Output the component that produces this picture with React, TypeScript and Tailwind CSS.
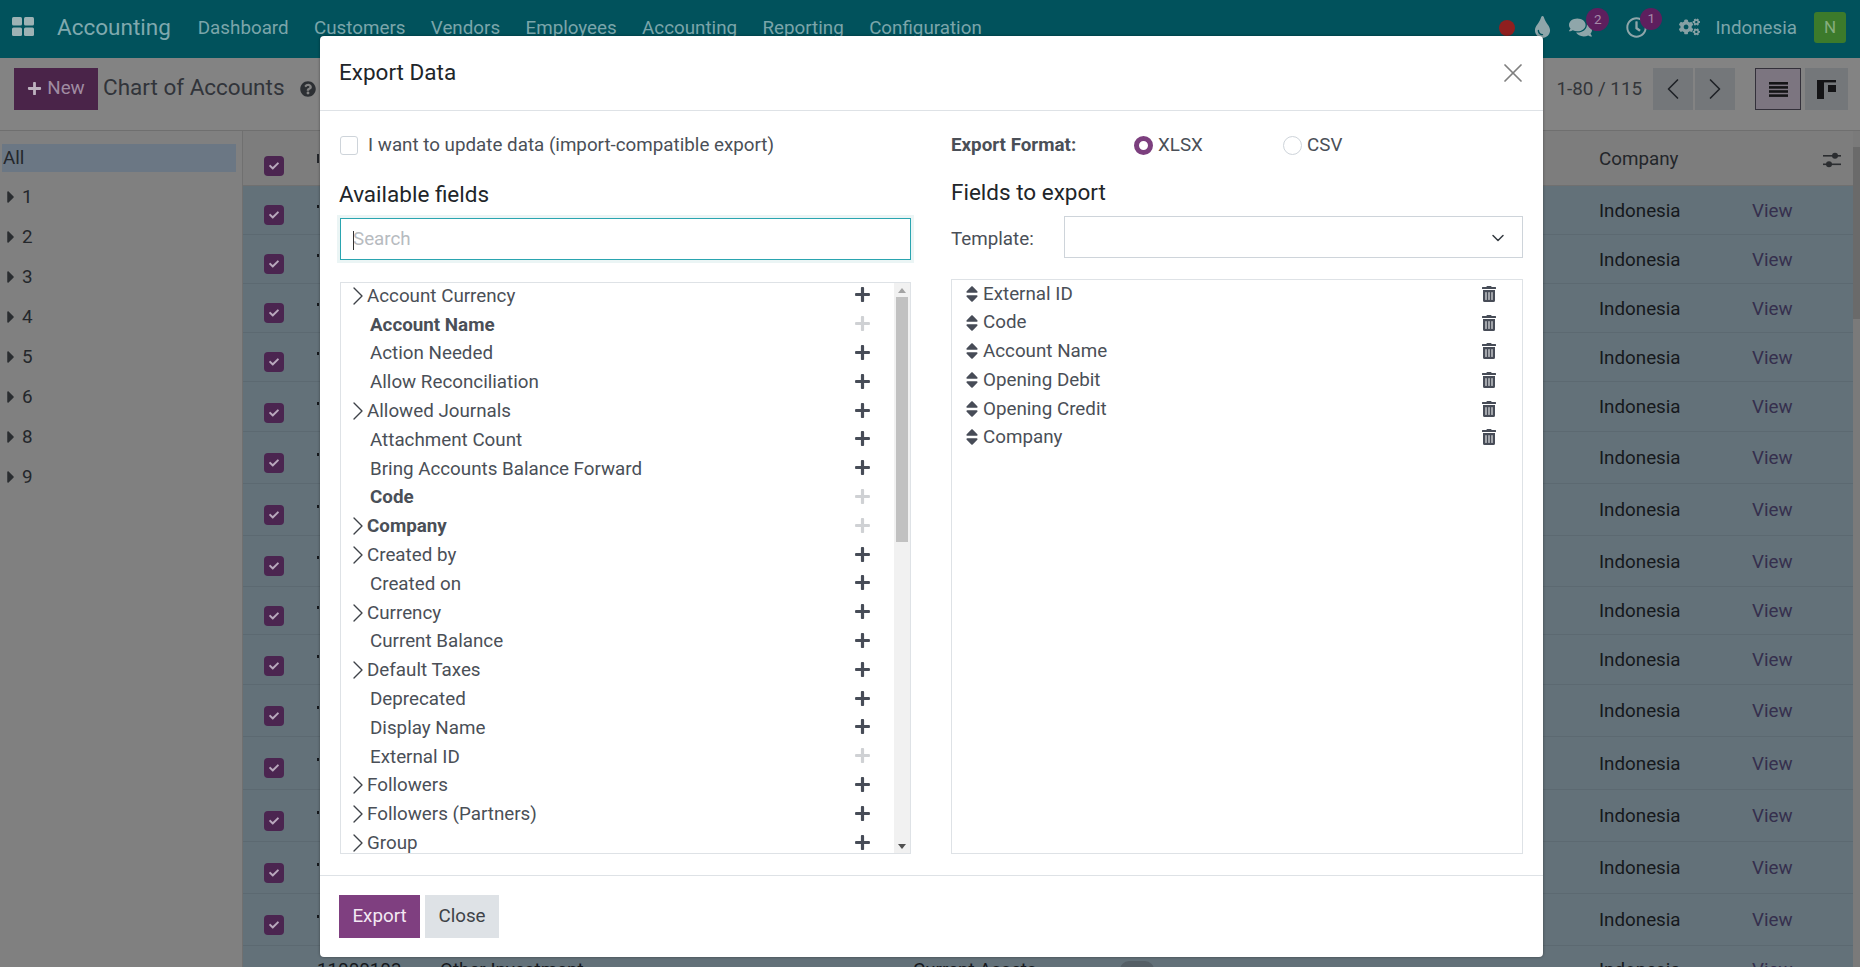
import { FaCaretRight, FaCheck, FaCogs, FaComments, FaPlus, FaQuestionCircle, FaRegClock, FaSort, FaTint, FaTrashAlt } from "react-icons/fa";
import { ChevronDown, ChevronLeft, ChevronRight, X } from "lucide-react";

const navLinks = ["Dashboard", "Customers", "Vendors", "Employees", "Accounting", "Reporting", "Configuration"];
const groups = ["1", "2", "3", "4", "5", "6", "8", "9"];

// rows behind the dialog only show their right-hand cells
const rows = [
  { h: "h-[49px]", pt: "pt-[11px]" },
  { h: "h-[49px]", pt: "pt-[11px]" },
  { h: "h-[49px]", pt: "pt-[11px]" },
  { h: "h-[49px]", pt: "pt-[11px]" },
  { h: "h-[50px]", pt: "pt-[13px]" },
  { h: "h-[52px]", pt: "pt-[13px]" },
  { h: "h-[52px]", pt: "pt-[13px]" },
  { h: "h-[51px]", pt: "pt-[12px]" },
  { h: "h-[48px]", pt: "pt-[11px]" },
  { h: "h-[50px]", pt: "pt-[13px]" },
  { h: "h-[52px]", pt: "pt-[13px]" },
  { h: "h-[53px]", pt: "pt-[13px]" },
  { h: "h-[52px]", pt: "pt-[13px]" },
  { h: "h-[52px]", pt: "pt-[13px]" },
  { h: "h-[52px]", pt: "pt-[13px]" },
];

const available = [
  { label: "Account Currency", expand: true },
  { label: "Account Name", bold: true, added: true },
  { label: "Action Needed" },
  { label: "Allow Reconciliation" },
  { label: "Allowed Journals", expand: true },
  { label: "Attachment Count" },
  { label: "Bring Accounts Balance Forward" },
  { label: "Code", bold: true, added: true },
  { label: "Company", expand: true, bold: true, added: true },
  { label: "Created by", expand: true },
  { label: "Created on" },
  { label: "Currency", expand: true },
  { label: "Current Balance" },
  { label: "Default Taxes", expand: true },
  { label: "Deprecated" },
  { label: "Display Name" },
  { label: "External ID", added: true },
  { label: "Followers", expand: true },
  { label: "Followers (Partners)", expand: true },
  { label: "Group", expand: true },
];

const selected = ["External ID", "Code", "Account Name", "Opening Debit", "Opening Credit", "Company"];

function RowCheck() {
  return (
    <span className="mt-2 ml-[21px] flex h-5 w-5 items-center justify-center rounded-[4px] bg-[#4b2550] text-[#b9a8bd]">
      <FaCheck className="h-[10px] w-[10px]" />
    </span>
  );
}

function Navbar() {
  return (
    <header className="flex h-[58px] shrink-0 items-center bg-[#01525c] pb-[2px] text-[#7ba5aa] shadow-[0_1px_2px_rgba(0,0,0,0.3)]">
      <svg className="mb-[3px] ml-3 h-[19px] w-[22px] text-[#9db2b4]" viewBox="0 0 22 19" fill="currentColor">
        <rect width="10" height="8.5" rx="1.5" />
        <rect x="12" width="10" height="8.5" rx="1.5" />
        <rect y="10.5" width="10" height="8.5" rx="1.5" />
        <rect x="12" y="10.5" width="10" height="8.5" rx="1.5" />
      </svg>
      <span className="ml-[23px] text-[22.5px] text-[#80a9ae]">Accounting</span>
      <nav className="ml-[27px] flex gap-[25.4px] text-[18.8px]">
        {navLinks.map((l, i) => (
          <span key={i}>{l}</span>
        ))}
      </nav>
      <div className="ml-auto flex items-center pr-[14px]">
        <span className="h-4 w-4 rounded-full bg-[#8f1f1f]" />
        <FaTint className="mb-[2px] ml-[19px] h-[22px] w-[17px] text-[#8fa6aa]" />
        <span className="relative mb-[2px] ml-[18px]">
          <FaComments className="h-[21px] w-[23px] text-[#8fa6aa]" />
          <span className="absolute -top-[9px] left-[17px] flex h-[23px] w-[23px] items-center justify-center rounded-full bg-[#5e1f5e] text-[13.5px] text-[#a58aa8]">2</span>
        </span>
        <span className="relative mb-[2px] ml-[34px]">
          <FaRegClock className="h-[21px] w-[21px] text-[#8fa6aa]" />
          <span className="absolute -top-[9px] left-[14px] flex h-[22px] w-[22px] items-center justify-center rounded-full bg-[#5e1f5e] text-[13.5px] text-[#a58aa8]">1</span>
        </span>
        <FaCogs className="mb-[2px] ml-[32px] h-[18px] w-[21px] text-[#86a0a4]" />
        <span className="ml-[15px] text-[18.8px]">Indonesia</span>
        <span className="mt-[-1px] ml-[17px] flex h-[31px] w-[32px] items-center justify-center rounded-[3px] bg-[#3c7a2b] text-[17px] text-[#86ad7e]">N</span>
      </div>
    </header>
  );
}

function ControlPanel() {
  return (
    <div className="flex h-[73px] shrink-0 items-start border-b border-[#6f6f6f] bg-[#838383] pt-[10px] pr-[12px] pl-[14px]">
      <button className="flex h-[42px] w-[84px] items-center justify-center gap-[5px] bg-[#4a2449] pb-[1px] text-[18.8px] text-[#a08ca2]">
        <FaPlus className="h-[15px] w-[15px] text-[#bdb2bf]" />
        New
      </button>
      <span className="mt-[3px] ml-[5px] text-[22.5px] text-[#31343a]">Chart of Accounts</span>
      <FaQuestionCircle className="mt-[13px] ml-[15px] h-4 w-4 text-[#2c2f33]" />
      <span className="mt-[7px] ml-auto text-[18.8px] text-[#33363a]">1-80 / 115</span>
      <button className="ml-[11px] flex h-[42px] w-[40px] items-center justify-center bg-[#74777a] text-[#1f2226]">
        <ChevronLeft className="h-[36px] w-[36px]" strokeWidth={1.1} />
      </button>
      <button className="ml-[2px] flex h-[42px] w-[40px] items-center justify-center bg-[#74777a] text-[#1f2226]">
        <ChevronRight className="h-[36px] w-[36px]" strokeWidth={1.1} />
      </button>
      <button className="ml-[20px] flex h-[42px] w-[46px] items-center justify-center border border-[#33303a] bg-[#7c7580]">
        <svg className="h-[15px] w-[19px] text-[#141416]" viewBox="0 0 19 15" fill="currentColor">
          <rect width="19" height="2.6" />
          <rect y="4.1" width="19" height="2.6" />
          <rect y="8.2" width="19" height="2.6" />
          <rect y="12.3" width="19" height="2.6" />
        </svg>
      </button>
      <button className="ml-[4px] flex h-[42px] w-[43px] items-center justify-center bg-[#74777a]">
        <svg className="h-[19px] w-[19px] text-[#141416]" viewBox="0 0 19 19" fill="currentColor">
          <rect width="19" height="2.4" />
          <rect y="2" width="7" height="17" />
          <rect x="11" y="5" width="8" height="7" />
        </svg>
      </button>
    </div>
  );
}

function Sidebar() {
  return (
    <aside className="w-[243px] shrink-0 border-r border-[#707070] bg-[#808080] pt-[13px] text-[18.8px] text-[#24272b]">
      <div className="ml-[2px] flex h-[28px] w-[234px] items-center bg-[#6b7784] pl-px">All</div>
      <div className="mt-[5px]">
        {groups.map((g) => (
          <div key={g} className="flex h-[40px] items-center">
            <FaCaretRight className="ml-[5px] h-[20px] w-[12px] text-[#2a2d30]" />
            <span className="ml-[5px]">{g}</span>
          </div>
        ))}
      </div>
    </aside>
  );
}

function AccountTable() {
  return (
    <main className="min-w-0 flex-1 overflow-hidden">
      <div className="flex h-[55px] border-b border-[#707070] bg-[#7d7d7d] text-[18.8px] text-[#23262a]">
        <span className="pt-[17px]">
          <RowCheck />
        </span>
        <span className="ml-[33px] flex w-[123px] items-center">
          <span className="h-[9px] w-[2px] bg-[#23262a]" />
        </span>
        <span className="w-[1159px]" />
        <span className="flex flex-1 items-center pt-[2px]">Company</span>
        <svg className="mt-[21px] mr-[12px] h-[16px] w-[18px] text-[#2b2d30]" viewBox="0 0 18 16" fill="currentColor">
          <rect y="3" width="18" height="1.6" />
          <circle cx="12" cy="3.8" r="3" />
          <rect y="11.5" width="18" height="1.6" />
          <circle cx="6" cy="12.3" r="3" />
        </svg>
      </div>
      {rows.map((r, i) => (
        <div key={i} className={`flex border-b border-[#5c6971] bg-[#637179] text-[18.8px] text-[#15181c] ${r.h}`}>
          <span className={r.pt}>
            <RowCheck />
          </span>
          <span className="ml-[33px] flex w-[123px] items-center">
            <span className="mb-[7px] h-[3px] w-[2px] bg-[#15181c]" />
          </span>
          <span className="w-[1159px]" />
          <span className="flex w-[153px] items-center pt-[2px]">Indonesia</span>
          <span className="flex items-center pt-[2px] text-[#352f4d]">View</span>
        </div>
      ))}
      <div className="flex h-[52px] bg-[#637179] pb-[4px] text-[18.8px] text-[#15181c]">
        <span className="pt-[13px]">
          <RowCheck />
        </span>
        <span className="ml-[33px] flex w-[123px] items-center">11000103</span>
        <span className="flex w-[473px] items-center">Other Investment</span>
        <span className="flex w-[207px] items-center">Current Assets</span>
        <span className="flex w-[479px] items-center">
          <span className="h-[18px] w-[34px] rounded-full bg-[#555f66]" />
        </span>
        <span className="flex w-[153px] items-center">Indonesia</span>
        <span className="flex items-center text-[#352f4d]">View</span>
      </div>
    </main>
  );
}

function FieldRow({ field }: { field: (typeof available)[number] }) {
  return (
    <div className="flex h-[28.8px] items-center text-[#4a4f57]">
      {field.expand ? (
        <span className="flex items-center pl-[11px]">
          <ChevronRight className="-mx-[10px] h-[32px] w-[32px] text-[#3e4248]" strokeWidth={1} />
          <span className={`ml-[3px] ${field.bold ? "font-bold" : ""}`}>{field.label}</span>
        </span>
      ) : (
        <span className={`pl-[29px] ${field.bold ? "font-bold" : ""}`}>{field.label}</span>
      )}
      <FaPlus className={`absolute left-[513px] mb-[2px] h-[17px] w-[17px] ${field.added ? "text-[#cfd1d4]" : "text-[#474c57]"}`} />
    </div>
  );
}

function ExportDialog() {
  return (
    <div className="absolute top-[36px] left-[320px] flex h-[921px] w-[1223px] flex-col rounded-[4px] bg-white text-[18.8px] shadow-[0_0_3px_rgba(0,0,0,0.4)]">
      <div className="flex h-[75px] shrink-0 items-start justify-between border-b border-[#dee2e6] pt-[21px] pr-[18px] pl-[19px]">
        <h4 className="-mt-px text-[22.5px] leading-[32px] text-[#212529]">Export Data</h4>
        <X className="mr-[-4px] h-[32px] w-[32px] text-[#7f7f7f]" strokeWidth={1.3} />
      </div>

      <div className="flex flex-1 gap-[40px] pt-[20px] pl-[20px]">
        <div className="w-[571px]">
          <label className="flex h-[28px] items-center text-[#4a4f57]">
            <span className="h-[19px] w-[18px] rounded-[3px] border border-[#ced4da] bg-white" />
            <span className="ml-[10px]">I want to update data (import-compatible export)</span>
          </label>
          <h4 className="mt-[19px] -ml-px h-[32px] text-[22.5px] leading-[32px] text-[#212529]">Available fields</h4>
          <div className="relative mt-[8px]">
            <input
              placeholder="Search"
              className="h-[42px] w-full border border-[#2aa5b0] px-[12px] text-[18.8px] shadow-[0_0_0_3px_rgba(1,126,132,0.08)] outline-none placeholder:text-[#b7bbbf]"
            />
            <span className="absolute top-[13px] left-[13px] h-[19px] w-px bg-[#333]" />
          </div>
          <div className="relative mt-[22px] flex h-[572px] overflow-hidden border border-[#dee2e6]">
            <div className="relative -mt-[1.5px] flex-1">
              {available.map((f) => (
                <FieldRow key={f.label} field={f} />
              ))}
            </div>
            <div className="flex w-[16px] shrink-0 flex-col items-center bg-[#f1f1f1]">
              <span className="mt-[5px] h-0 w-0 border-x-[4px] border-b-[5px] border-x-transparent border-b-[#a3a3a3]" />
              <span className="mt-[4px] h-[245px] w-[12px] bg-[#c1c1c1]" />
              <span className="mt-auto mb-[4px] h-0 w-0 border-x-[4px] border-t-[5px] border-x-transparent border-t-[#505050]" />
            </div>
          </div>
        </div>

        <div className="w-[572px]">
          <div className="flex h-[28px] items-center text-[#4a4f57]">
            <span className="w-[183px] font-bold">Export Format:</span>
            <span className="h-[19px] w-[19px] rounded-full border-[5px] border-[#7c3f7e] bg-white" />
            <span className="ml-[5px] w-[125px]">XLSX</span>
            <span className="h-[19px] w-[19px] rounded-full border border-[#ced4da]" />
            <span className="ml-[5px]">CSV</span>
          </div>
          <h4 className="mt-[17px] h-[32px] text-[22.5px] leading-[32px] text-[#212529]">Fields to export</h4>
          <div className="mt-[8px] flex items-center">
            <span className="w-[113px] pt-[5px] text-[#4a4f57]">Template:</span>
            <div className="flex h-[42px] flex-1 items-center justify-end border border-[#ced4da] pt-[2px] pr-[14px]">
              <ChevronDown className="h-[20px] w-[20px] text-[#343a40]" strokeWidth={1.8} />
            </div>
          </div>
          <div className="mt-[21px] h-[575px] overflow-hidden border border-[#dee2e6]">
            <div className="-mt-[0.5px]">
              {selected.map((s) => (
                <div key={s} className="flex h-[28.7px] items-center pr-[26px] pl-[13px] text-[#4a4f57]">
                  <FaSort className="h-[20px] w-[14px] text-[#474c57]" />
                  <span className="ml-[4px] flex-1">{s}</span>
                  <FaTrashAlt className="h-[16px] w-[14px] text-[#474c57]" />
                </div>
              ))}
            </div>
          </div>
        </div>
      </div>

      <div className="flex h-[82px] shrink-0 items-start gap-[5px] border-t border-[#dee2e6] pt-[19px] pl-[19px]">
        <button className="h-[43px] w-[81px] bg-[#7f3f80] pb-[1px] text-[#f3e9f3]">Export</button>
        <button className="h-[43px] w-[74px] bg-[#dee2e6] pb-[1px] text-[#3e4248]">Close</button>
      </div>
    </div>
  );
}

export default function App() {
  return (
    <div className="relative flex h-[967px] w-[1860px] flex-col overflow-hidden bg-[#808080] [font-family:Roboto,sans-serif]">
      <Navbar />
      <ControlPanel />
      <div className="flex min-h-0 flex-1">
        <Sidebar />
        <AccountTable />
        <div className="w-[7px] shrink-0 bg-[#7a7a7a]">
          <div className="mt-[16px] h-[172px] bg-[#6a6a6a]" />
        </div>
      </div>
      <ExportDialog />
    </div>
  );
}
